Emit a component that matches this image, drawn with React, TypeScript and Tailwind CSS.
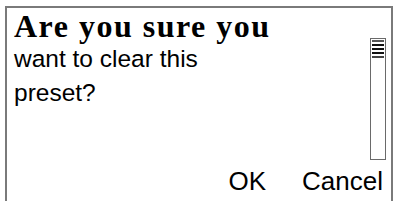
import React from "react";

export default function App() {
  return (
    <div className="w-[396px] h-[201px] bg-white overflow-hidden">
      <div className="ml-[5px] mt-[6px] w-[388px] h-[220px] border-2 border-b-0 border-[#7a7a7a] flex flex-col">
        <div className="flex flex-row">
          <div className="flex flex-col pl-[7px] flex-1">
            <div
              className="text-[32px] leading-[34px] font-bold text-black tracking-[1.5px] mt-[1px]"
              style={{ fontFamily: '"Liberation Serif", "DejaVu Serif", serif' }}
            >
              Are you sure you
            </div>
            <div
              className="w-[220px] text-[24.5px] leading-[34px] text-black -mt-[1px]"
              style={{ fontFamily: '"Liberation Sans", Arial, sans-serif' }}
            >
              want to clear this preset?
            </div>
          </div>
          <div className="mr-[5px] mt-[30px] w-[16px] h-[122px] border border-[#6a6a6a] bg-white flex flex-col">
            <div className="flex flex-col gap-[2px] pt-[1px] px-[1px]">
              <div className="h-[2px] bg-[#555]" />
              <div className="h-[2px] bg-[#111]" />
              <div className="h-[2px] bg-[#111]" />
              <div className="h-[2px] bg-[#111]" />
              <div className="h-[2px] bg-[#444]" />
            </div>
          </div>
        </div>
        <div
          className="flex flex-row justify-end gap-[36px] pr-[8px] mt-[7px] text-[26px] leading-[28px] text-black"
          style={{ fontFamily: '"Liberation Sans", Arial, sans-serif' }}
        >
          <span>OK</span>
          <span>Cancel</span>
        </div>
      </div>
    </div>
  );
}
